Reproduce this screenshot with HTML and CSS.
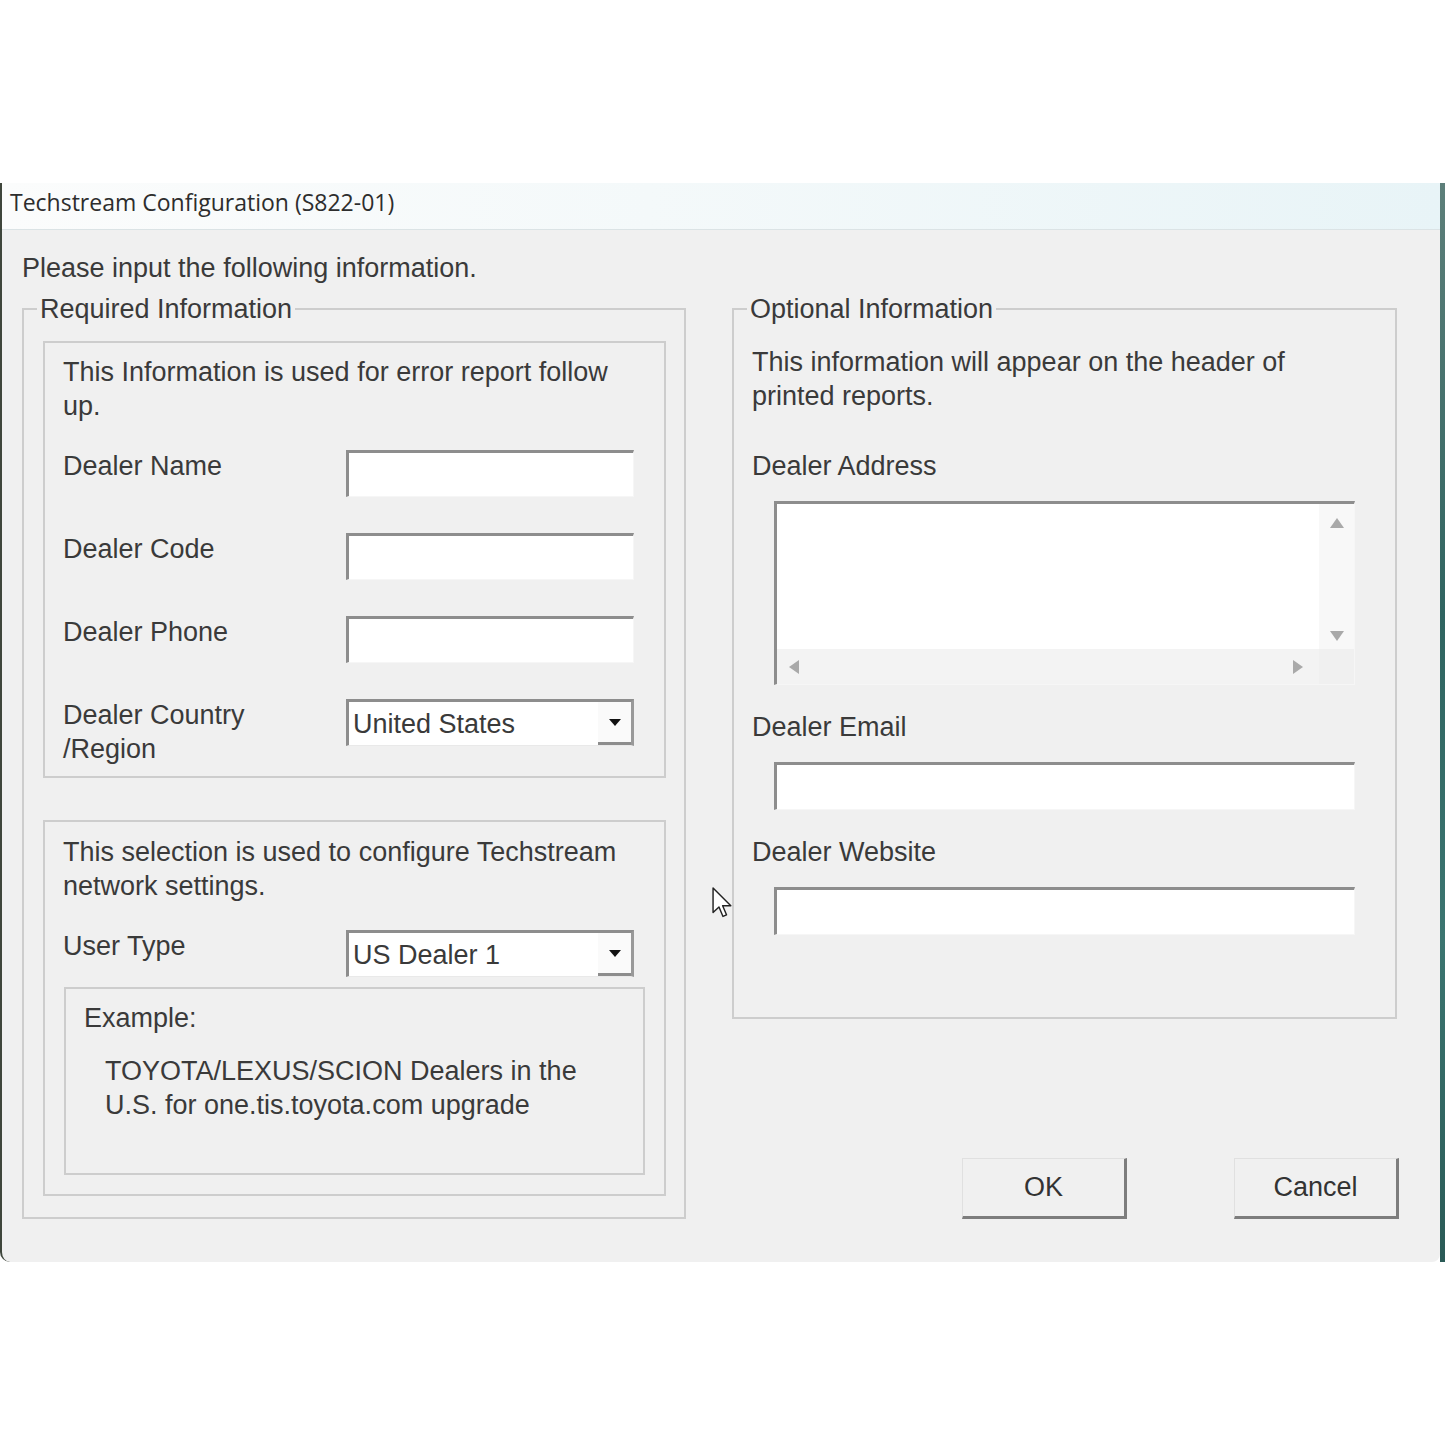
FILE: index.html
```html
<!DOCTYPE html>
<html lang="en">
<head>
<meta charset="utf-8">
<title>Techstream Configuration</title>
<link rel="stylesheet" href="styles.css">
</head>
<body>
<div class="screen">
  <div class="window">
    <div class="titlebar">Techstream Configuration (S822-01)</div>
    <div class="content">
      <p class="intro">Please input the following information.</p>
      <div class="columns">
        <fieldset class="group group-req">
          <legend>Required Information</legend>
          <div class="panel panel-info">
            <p class="note">This Information is used for error report follow<br>up.</p>
            <div class="row first"><span class="label">Dealer Name</span><span class="input"></span></div>
            <div class="row"><span class="label">Dealer Code</span><span class="input"></span></div>
            <div class="row"><span class="label">Dealer Phone</span><span class="input"></span></div>
            <div class="row"><span class="label">Dealer Country<br>/Region</span><span class="select"><span class="select-text">United States</span><span class="drop"><svg width="12" height="7" viewBox="0 0 12 7"><polygon points="0,0 12,0 6,7" fill="#111"/></svg></span></span></div>
          </div>
          <div class="panel panel-net">
            <p class="note">This selection is used to configure Techstream<br>network settings.</p>
            <div class="row first"><span class="label">User Type</span><span class="select"><span class="select-text">US Dealer 1</span><span class="drop"><svg width="12" height="7" viewBox="0 0 12 7"><polygon points="0,0 12,0 6,7" fill="#111"/></svg></span></span></div>
            <div class="example">
              <p class="example-title">Example:</p>
              <p class="example-text">TOYOTA/LEXUS/SCION Dealers in the<br>U.S. for one.tis.toyota.com upgrade</p>
            </div>
          </div>
        </fieldset>
        <div class="right-col">
          <fieldset class="group group-opt">
            <legend>Optional Information</legend>
            <p class="note">This information will appear on the header of<br>printed reports.</p>
            <p class="field-label first">Dealer Address</p>
            <div class="textarea">
              <div class="ta-text"></div>
              <div class="vscroll">
                <svg width="14" height="10" viewBox="0 0 14 10"><polygon points="7,0 14,10 0,10" fill="#a9a9a9"/></svg>
                <svg width="14" height="10" viewBox="0 0 14 10"><polygon points="0,0 14,0 7,10" fill="#a9a9a9"/></svg>
              </div>
              <div class="hscroll">
                <svg width="10" height="14" viewBox="0 0 10 14"><polygon points="10,0 10,14 0,7" fill="#a9a9a9"/></svg>
                <svg width="10" height="14" viewBox="0 0 10 14"><polygon points="0,0 10,7 0,14" fill="#a9a9a9"/></svg>
              </div>
              <div class="corner"></div>
            </div>
            <p class="field-label">Dealer Email</p>
            <div class="input wide"></div>
            <p class="field-label">Dealer Website</p>
            <div class="input wide"></div>
          </fieldset>
          <div class="buttons">
            <button class="btn" type="button">OK</button>
            <button class="btn" type="button">Cancel</button>
          </div>
        </div>
      </div>
    </div>
  </div>
  <div class="desk-edge"></div>
  <svg class="cursor" width="21" height="32" viewBox="0 0 13 20"><path d="M0.6 0.6 L0.6 16 L4.3 12.5 L6.8 18.4 L9 17.4 L6.6 11.7 L11.7 11.7 Z" fill="#fff" stroke="#222" stroke-width="0.9" stroke-linejoin="round"/></svg>
</div>
</body>
</html>
```
FILE: styles.css
```css
* { box-sizing: border-box; }
html, body { margin: 0; padding: 0; background: #fff; }
body { width: 1445px; height: 1445px; overflow: hidden; font-family: "Liberation Sans", Arial, sans-serif; font-size: 27px; color: #3a3a3a; }
p { margin: 0; }

.screen { position: relative; display: flex; padding-top: 183px; }
.window { width: 1440px; height: 1079px; background: #f0f0f0; border-left: 2px solid #3f463c; border-bottom-left-radius: 10px; border-bottom-right-radius: 8px; display: flex; flex-direction: column; }
.desk-edge { width: 5px; height: 1079px; background: linear-gradient(180deg, #5d7f7a, #2f6460 40%, #3b7570 70%, #2a5a56); }

.titlebar { height: 47px; line-height: 38px; padding-left: 8px; font-family: "Open Sans", "Noto Sans", sans-serif; font-size: 23px; color: #2d2d2d; background: linear-gradient(90deg, #fbfcfc 0%, #f4f9fa 45%, #e8f4f7 100%); border-bottom: 1px solid #dbe3e5; }

.content { flex: 1; padding: 21px 0 0 20px; }
.intro { line-height: 34px; }
.columns { display: flex; gap: 46px; margin-top: 9px; }

.group { margin: 0; border: 2px solid #cdcdcd; min-width: 0; }
.group legend { font-size: 27px; line-height: 30px; padding: 0 3px; }
.group-req { width: 664px; padding: 17px 18px 19px 19px; }
.group-req legend { margin-left: -6px; }
.group-opt { width: 665px; height: 725px; padding: 21px 20px 0 18px; }
.group-opt legend { margin-left: -5px; }

.note { line-height: 34px; }

.panel { border: 2px solid #cdcdcd; padding-left: 18px; }
.panel-info { height: 437px; padding-top: 12px; }
.panel-net { height: 376px; margin-top: 42px; padding-top: 13px; }

.row { display: flex; align-items: flex-start; margin-top: 35px; }
.row.first { margin-top: 26px; }
.label { width: 283px; line-height: 34px; }

.input { display: block; width: 288px; height: 47px; margin-top: 1px; background: #fff; border-top: 3px solid #8d8d8d; border-left: 3px solid #8d8d8d; border-right: 1px solid #f6f6f6; border-bottom: 1px solid #f6f6f6; }
.input.wide { width: 581px; height: 48px; margin: 18px 0 0 22px; }

.select { display: flex; align-items: center; width: 288px; height: 47px; margin-top: 1px; background: #fff; border-top: 3px solid #8d8d8d; border-left: 3px solid #8d8d8d; border-right: 3px solid #999; border-bottom: 1px solid #e9e9e9; }
.select-text { flex: 1; padding-left: 4px; line-height: 34px; }
.drop { width: 33px; height: 100%; display: flex; align-items: center; justify-content: center; border-bottom: 3px solid #8d8d8d; background: #fafafa; }

.example { width: 581px; height: 188px; margin: 10px 0 0 1px; border: 2px solid #cdcdcd; padding: 12px 0 0 18px; }
.example-title { line-height: 34px; }
.example-text { line-height: 34px; margin-top: 19px; padding-left: 21px; }

.right-col { display: flex; flex-direction: column; }
.field-label { line-height: 34px; margin-top: 25px; }
.field-label.first { margin-top: 36px; }

.textarea { display: grid; grid-template-columns: 1fr 35px; grid-template-rows: 1fr 35px; width: 581px; height: 184px; margin: 18px 0 0 22px; background: #fff; border-top: 3px solid #8d8d8d; border-left: 3px solid #8d8d8d; border-right: 1px solid #f6f6f6; border-bottom: 1px solid #f6f6f6; }
.ta-text { background: #fff; }
.vscroll { background: #f8f8f8; display: flex; flex-direction: column; align-items: center; justify-content: space-between; padding: 14px 0 8px; }
.hscroll { background: #f3f3f3; display: flex; align-items: center; justify-content: space-between; padding: 0 16px 0 12px; }
.corner { background: #f0f0f0; }

.buttons { display: flex; justify-content: flex-end; gap: 107px; margin: 139px -2px 0 0; }
.btn { width: 165px; height: 61px; padding: 0; font-family: "Liberation Sans", Arial, sans-serif; font-size: 27px; color: #333; background: #f0f0f0; border-top: 1px solid #e0e0e0; border-left: 1px solid #e0e0e0; border-right: 3px solid #7d7d7d; border-bottom: 3px solid #7d7d7d; }

.cursor { position: absolute; left: 712px; top: 887px; }
```
